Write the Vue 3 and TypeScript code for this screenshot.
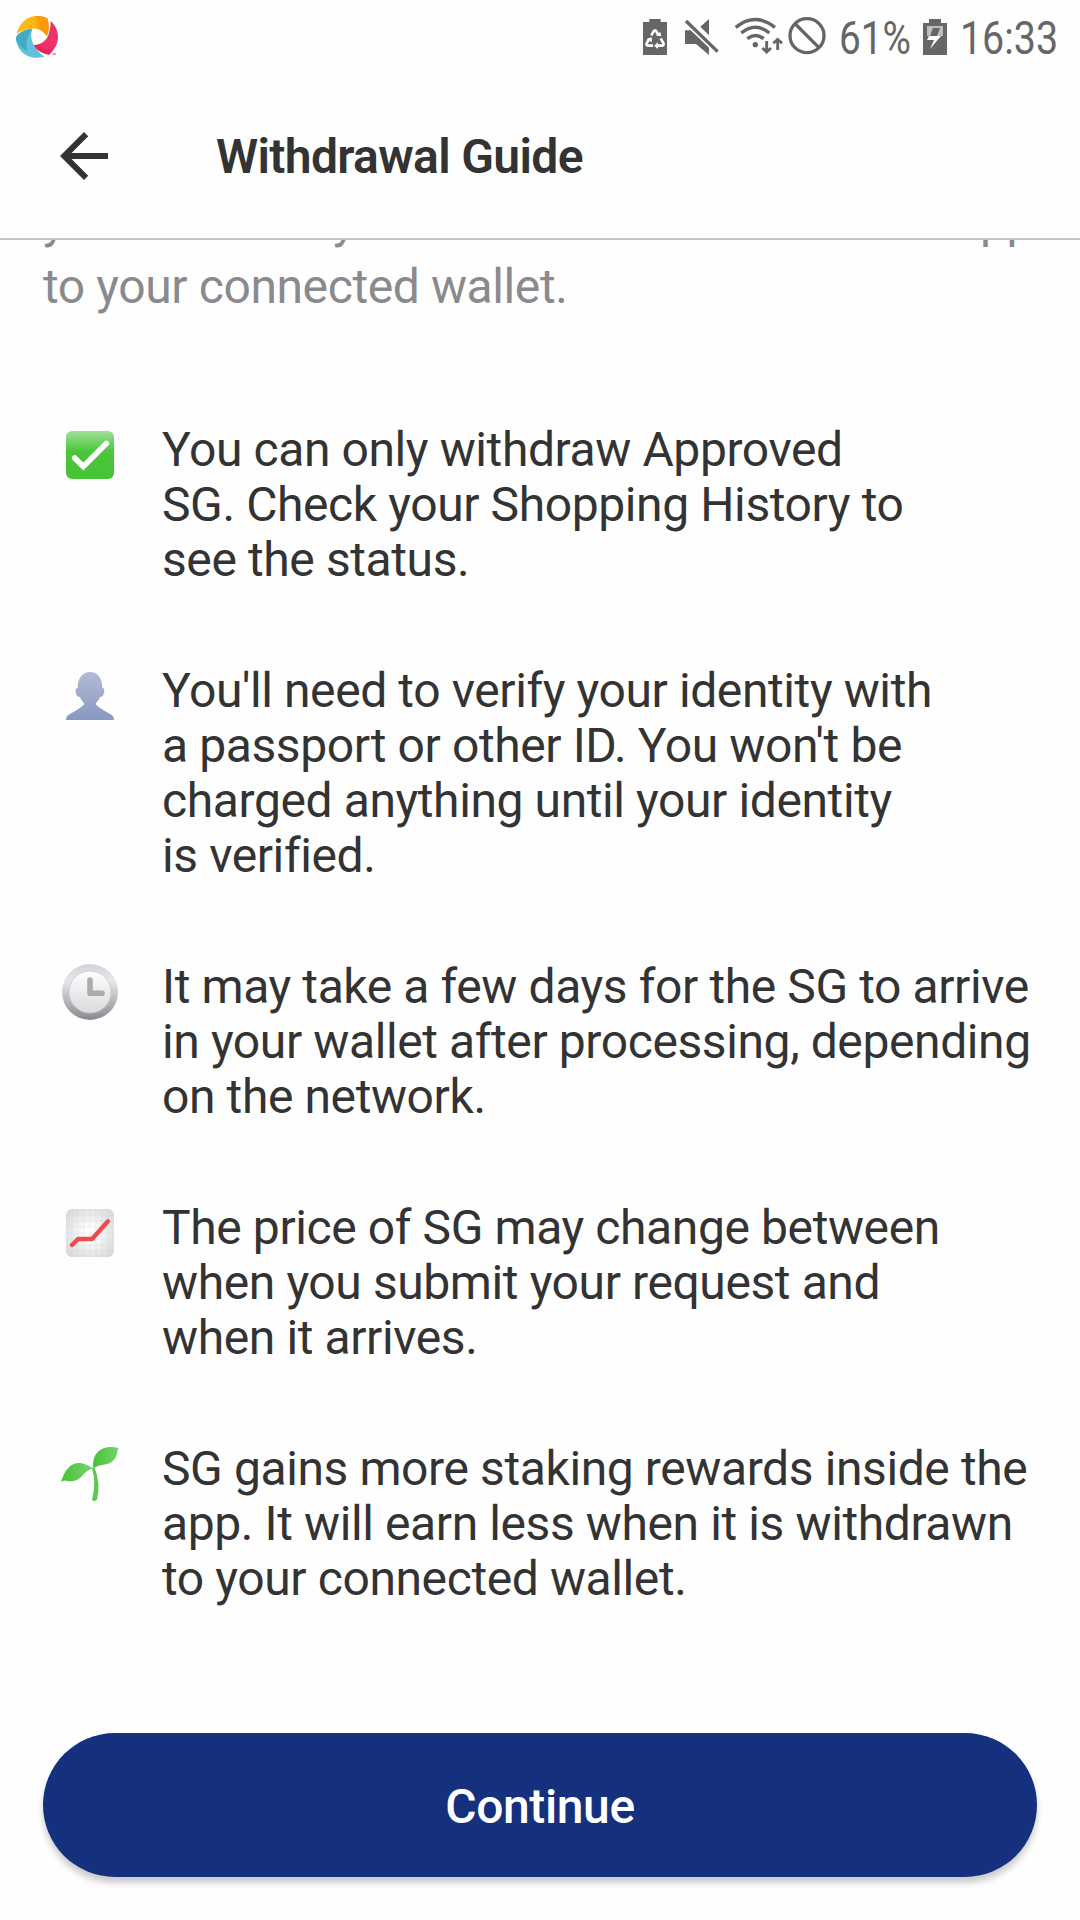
<script setup lang="ts">
interface GuideItem {
  icon: 'check' | 'person' | 'clock' | 'chart' | 'sprout'
  lines: string[]
}

const items: GuideItem[] = [
  {
    icon: 'check',
    lines: ['You can only withdraw Approved', 'SG. Check your Shopping History to', 'see the status.'],
  },
  {
    icon: 'person',
    lines: [
      "You'll need to verify your identity with",
      "a passport or other ID. You won't be",
      'charged anything until your identity',
      'is verified.',
    ],
  },
  {
    icon: 'clock',
    lines: ['It may take a few days for the SG to arrive', 'in your wallet after processing, depending', 'on the network.'],
  },
  {
    icon: 'chart',
    lines: ['The price of SG may change between', 'when you submit your request and', 'when it arrives.'],
  },
  {
    icon: 'sprout',
    lines: ['SG gains more staking rewards inside the', 'app. It will earn less when it is withdrawn', 'to your connected wallet.'],
  },
]
</script>

<template>
  <div class="screen">
    <div class="status">
      <svg class="logo" width="80" height="76" viewBox="0 0 240 228">
        <defs>
          <linearGradient id="lo" x1="0" x2="1"><stop offset=".55" stop-color="#fdb813" /><stop offset=".75" stop-color="#fb9a06" /></linearGradient>
          <linearGradient id="lp" x1="0" y1="1" x2=".6" y2="0"><stop offset="0" stop-color="#c31a3c" /><stop offset=".5" stop-color="#ee2c64" /><stop offset="1" stop-color="#f0386f" /></linearGradient>
        </defs>
        <path d="M50 101C57 70 82 48 111 48Q128 48 142 55Q151 79 141 109C130 91 114 83 94 86Q70 87 50 101Z" fill="url(#lo)" />
        <path d="M104 48Q127 47 142 55Q151 79 141 109Q133 98 125 92Q122 65 104 48Z" fill="#fb9906" />
        <path d="M152 63C177 84 181 122 163 145Q156 157 147 164Q118 160 99 136Q142 132 148 94Q153 79 152 63Z" fill="#ee326b" />
        <path d="M99 136Q137 135 164 111L170 130Q161 153 147 164Q117 159 99 136Z" fill="url(#lp)" />
        <path d="M97 87C88 111 96 143 133 170C103 180 62 168 51 131Q45 116 50 109Q68 88 97 87Z" fill="#62c1da" />
        <path d="M97 87Q75 111 80 154Q56 141 48 117L50 107Q68 88 97 87Z" fill="#43aac6" />
        <path d="M157 161H168M159 164H167" stroke="#e34a76" stroke-width="2" />
      </svg>
      <svg class="icons" width="218" height="76" viewBox="0 0 654 228">
        <g fill="#666">
          <path d="M69 66H88V57H122V66H141V165H69Z" />
          <path d="M195 91H212L267 143V165L228 132H195ZM267 57V106L241 80Z" />
          <circle cx="406" cy="134" r="8" />
        </g>
        <g fill="none" stroke="#666" stroke-width="10">
          <path d="M198 63L293 155" />
          <path d="M347 82Q406 35 465 82M364 99Q406 64 448 99M382 116Q406 97 431 116" />
          <circle cx="561" cy="107" r="51" />
          <path d="M526 72L596 142" />
        </g>
        <g fill="none" stroke="#666" stroke-width="8.5">
          <path d="M440 123V156M427 144L440 156L453 144M473 150V117M460 130L473 118L486 130" />
        </g>
        <g fill="none" stroke="#fff" stroke-width="8">
          <path d="M94 106L101 94Q105 88 109 94L116 106M122 115L130 129Q133 137 125 137H111M99 137H85Q77 137 80 130L88 116" />
        </g>
        <path d="M107 106L124 109L121 96ZM114 127V147L102 137ZM80 118L95 111L96 127Z" fill="#fff" />
      </svg>
      <svg class="clock" width="242" height="76" viewBox="0 0 242 76">
        <g fill="#666" font-family="Roboto, sans-serif" font-size="45.5">
          <text x="1" y="54" textLength="72" lengthAdjust="spacingAndGlyphs">61%</text>
          <text x="122" y="54" textLength="98" lengthAdjust="spacingAndGlyphs">16:33</text>
        </g>
        <path d="M85 23H91V19H103V23H109V55H85Z" fill="#666" />
        <path d="M89 26H105V36H89Z" fill="#bebebe" />
        <path d="M95 28H102L99 36H92Z" fill="#666" />
        <path d="M91 36H103L92 49L96 40H89Z" fill="#fff" />
      </svg>
    </div>

    <header class="header">
      <svg class="back" width="72" height="72" viewBox="0 0 24 24">
        <path d="M20 11H7.83l5.59-5.59L12 4l-8 8 8 8 1.41-1.41L7.83 13H20z" fill="#333" />
      </svg>
      <h1>Withdrawal Guide</h1>
    </header>

    <main class="content">
      <p class="intro">
        <span class="first"><span>you can readily withdraw them all from the</span><span>app</span></span>
        <span>to your connected wallet.</span>
      </p>

      <ul class="list">
        <li v-for="item in items" :key="item.icon" class="item">
          <svg v-if="item.icon === 'check'" class="icon" viewBox="0 0 60 60">
            <defs>
              <linearGradient id="g1" x1="0" y1="0" x2="0" y2="1"><stop offset="0" stop-color="#9fe098" /><stop offset=".42" stop-color="#4bc63b" /><stop offset="1" stop-color="#46c336" /></linearGradient>
            </defs>
            <rect x="6" y="6" width="48" height="48" rx="6" fill="url(#g1)" />
            <path d="M14.7 33L23.3 41.5L46.3 18.5" fill="none" stroke="#fff" stroke-width="5.6" stroke-linecap="round" />
          </svg>
          <svg v-else-if="item.icon === 'person'" class="icon" viewBox="0 0 60 60">
            <defs>
              <linearGradient id="g2" x1="0" y1="0" x2="0" y2="1"><stop offset="0" stop-color="#b3bad5" /><stop offset="1" stop-color="#8998c2" /></linearGradient>
            </defs>
            <path d="M30 6C37.5 6 42.3 12 42.3 22C45 21.5 44.8 27 43 29.5Q42 31 40 31Q39 34.5 36 37V38.5Q39 42 51 48.5Q54 50.5 54 54H6Q6 50.5 9 48.5Q21 42 24 38.5V37Q21 34.5 20 31Q18 31 17 29.5C15.2 27 15 21.5 17.7 22C17.7 12 22.5 6 30 6Z" fill="url(#g2)" />
          </svg>
          <svg v-else-if="item.icon === 'clock'" class="icon" viewBox="0 0 60 60">
            <defs>
              <linearGradient id="g3" x1="0" y1="0" x2="0" y2="1"><stop offset="0" stop-color="#d4d3da" /><stop offset=".3" stop-color="#e7e6ec" /><stop offset=".55" stop-color="#c6c5cb" /><stop offset="1" stop-color="#89888e" /></linearGradient>
              <linearGradient id="g4" x1="0" y1="0" x2="0" y2="1"><stop offset="0" stop-color="#fff" /><stop offset="1" stop-color="#dadada" /></linearGradient>
            </defs>
            <circle cx="30" cy="30" r="28" fill="url(#g3)" />
            <circle cx="30" cy="30" r="21" fill="url(#g4)" stroke="#c9c9cd" stroke-width=".8" />
            <path d="M30 18V31.3H42" fill="none" stroke="#acabb0" stroke-width="5.6" stroke-linecap="round" stroke-linejoin="round" />
          </svg>
          <svg v-else-if="item.icon === 'chart'" class="icon" viewBox="0 0 60 60">
            <defs>
              <radialGradient id="g5" r=".7"><stop offset=".15" stop-color="#fff" /><stop offset="1" stop-color="#d2d4d7" /></radialGradient>
            </defs>
            <rect x="6" y="6" width="48" height="48" rx="6" fill="url(#g5)" />
            <path d="M12 6V54M18 6V54M24 6V54M30 6V54M36 6V54M42 6V54M48 6V54M6 12H54M6 18H54M6 24H54M6 30H54M6 36H54M6 42H54M6 48H54" stroke="#c8cbd0" stroke-opacity=".32" stroke-width=".8" />
            <path d="M12 42L18 36H32L48 18.3" fill="none" stroke="#f04b4b" stroke-width="4.4" stroke-linecap="round" stroke-linejoin="round" />
          </svg>
          <svg v-else class="icon" viewBox="0 0 60 60">
            <defs>
              <linearGradient id="g6"><stop offset="0" stop-color="#47c238" /><stop offset="1" stop-color="#77d36f" /></linearGradient>
            </defs>
            <path d="M1 38C4 27 10 19 19 19Q25 19 33 24.5Q27 26 23 31C17 38 11 38 5 36.4Q2.5 36.5 1 38Z" fill="url(#g6)" />
            <path d="M33.5 24.5C31.5 13 38 3 51 3Q55 3 58.8 4.3L57.5 6C57 15 52 19.5 44 20.7Q37 21.5 33.5 24.5Z" fill="url(#g6)" />
            <path d="M32 24L34.5 23Q41 40 37 55.5Q34 58.5 32 55.5Q36.5 39 32 24Z" fill="#5bca4f" />
          </svg>
          <p class="text">
            <template v-for="(line, i) in item.lines" :key="i"><br v-if="i > 0" />{{ line }}</template>
          </p>
        </li>
      </ul>
    </main>

    <footer class="footer">
      <button class="continue" type="button">Continue</button>
    </footer>
  </div>
</template>

<style>
body {
  margin: 0;
  background: #fefefe;
}
</style>

<style scoped>
.screen {
  width: 1080px;
  height: 1920px;
  display: flex;
  flex-direction: column;
  overflow: hidden;
  background: #fefefe;
  font-family: Roboto, sans-serif;
  color: #333;
}
.status {
  display: flex;
  height: 76px;
  flex: none;
}
.icons {
  margin-left: 540px;
}
.header {
  display: flex;
  align-items: flex-start;
  height: 118px;
  flex: none;
  padding: 44px 48px 0;
  border-bottom: 2px solid #c4c4c4;
}
.header h1 {
  margin: 7px 0 0 96px;
  font-size: 48px;
  line-height: 60px;
  font-weight: 600;
  letter-spacing: -0.65px;
  white-space: nowrap;
}
.content {
  flex: 1;
  min-height: 0;
  overflow: hidden;
}
.intro {
  display: flex;
  flex-direction: column;
  width: 990px;
  margin: -52px 0 0 43px;
  font-size: 48px;
  line-height: 66px;
  letter-spacing: -0.4px;
  color: #8a8a8e;
  white-space: nowrap;
}
.first {
  display: flex;
  justify-content: space-between;
}
.list {
  margin: 102px 0 0;
  padding: 0 0 0 60px;
  list-style: none;
  display: flex;
  flex-direction: column;
  gap: 76px;
}
.item {
  display: flex;
  align-items: flex-start;
}
.icon {
  width: 60px;
  height: 60px;
  margin: 3px 42px 0 0;
  flex: none;
}
.text {
  margin: 0;
  font-size: 48px;
  line-height: 55px;
  letter-spacing: -0.4px;
  white-space: nowrap;
}
.footer {
  flex: none;
  padding: 0 43px 43px;
}
.continue {
  display: block;
  width: 100%;
  height: 144px;
  padding: 2px 0 0;
  border: 0;
  border-radius: 72px;
  background: #15307c;
  box-shadow: 0 6px 6px rgba(0, 0, 0, 0.2);
  color: #fff;
  font-family: inherit;
  font-size: 48px;
  font-weight: 500;
  letter-spacing: -0.4px;
}
</style>
